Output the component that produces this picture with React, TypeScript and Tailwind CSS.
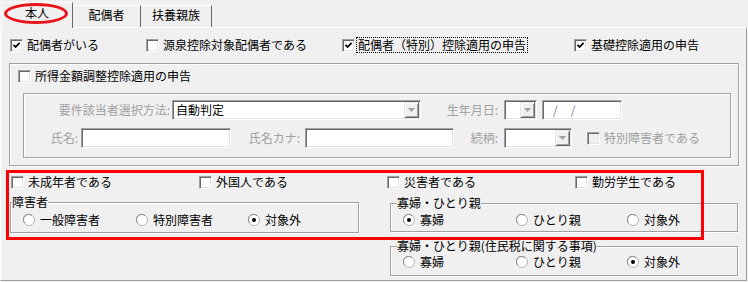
import React from 'react';

const DIS = 'text-[#a0a0a0]';
const sunken =
  'border border-t-[#a0a0a0] border-l-[#a0a0a0] border-r-white border-b-white shadow-[inset_1px_1px_0_#696969,inset_-1px_-1px_0_#e3e3e3]';

function Box({ checked, disabled }: { checked?: boolean; disabled?: boolean }) {
  return (
    <span className={`relative block w-[13px] h-[13px] shrink-0 ${sunken} ${disabled ? 'bg-[#f0f0f0]' : 'bg-white'}`}>
      {checked && (
        <svg className="absolute left-[1px] top-[1px]" width="9" height="9" viewBox="0 0 9 9">
          <path d="M1.5 3.8 L3.6 6 L7.6 1.8" stroke="#000" strokeWidth="1.8" fill="none" />
        </svg>
      )}
    </span>
  );
}

interface CheckProps {
  label: string;
  checked?: boolean;
  disabled?: boolean;
  focus?: boolean;
  className?: string;
}

function Check({ label, checked, disabled, focus, className = '' }: CheckProps) {
  return (
    <div className={`flex items-center h-[16px] shrink-0 ${className}`}>
      <Box checked={checked} disabled={disabled} />
      <span
        className={`leading-[14px] whitespace-nowrap ${disabled ? DIS : ''} ${
          focus ? 'ml-[2px] px-[1px] outline-1 outline-dotted outline-black' : 'ml-[4px]'
        }`}
      >
        {label}
      </span>
    </div>
  );
}

function Radio({ label, checked, className = '' }: { label: string; checked?: boolean; className?: string }) {
  return (
    <div className={`flex items-center h-[14px] shrink-0 ${className}`}>
      <svg width="12" height="12" viewBox="0 0 12 12" className="shrink-0">
        <circle cx="6" cy="6" r="5.5" fill="#fff" stroke="#b4b4b4" />
        <path d="M1.8 9 A5 5 0 0 1 9 1.8" stroke="#8a8a8a" fill="none" />
        {checked && <circle cx="6" cy="6" r="2" fill="#000" />}
      </svg>
      <span className="ml-[5px] leading-[14px] whitespace-nowrap">{label}</span>
    </div>
  );
}

function Group({
  legend,
  legendPos = 'left-[1px]',
  className = '',
  children,
}: {
  legend?: string;
  legendPos?: string;
  className?: string;
  children?: React.ReactNode;
}) {
  return (
    <div className={`relative border border-[#a0a0a0] shadow-[inset_1px_1px_0_#fff,1px_1px_0_#fff] ${className}`}>
      {legend && (
        <span className={`absolute top-[-8px] ${legendPos} bg-[#f0f0f0] leading-[14px] whitespace-nowrap`}>{legend}</span>
      )}
      {children}
    </div>
  );
}

function DropButton() {
  return (
    <span className="flex items-center justify-center w-[15px] shrink-0 bg-[#f0f0f0] border border-t-[#e3e3e3] border-l-[#e3e3e3] border-r-[#696969] border-b-[#696969] shadow-[inset_1px_1px_0_#fff,inset_-1px_-1px_0_#a0a0a0]">
      <svg width="7" height="4" viewBox="0 0 7 4">
        <path d="M0 0 H7 L3.5 4 Z" fill="#a0a0a0" />
      </svg>
    </span>
  );
}

function Combo({ text, className = '' }: { text?: string; className?: string }) {
  return (
    <div className={`flex h-[20px] p-[1px] bg-white shrink-0 ${sunken} ${className}`}>
      <span className="flex-1 pl-[2px] leading-[16px] whitespace-nowrap">{text}</span>
      <DropButton />
    </div>
  );
}

export default function App() {
  return (
    <div className="relative w-[748px] h-[282px] overflow-hidden bg-[#f0f0f0] text-[12px] text-black font-['Noto_Sans_CJK_JP','Noto_Sans',sans-serif]">
      {/* tabs */}
      <div className="flex items-end h-[27px] pl-[1px]">
        <div className="relative z-10 w-[72px] h-[26px] -mb-px bg-[#f0f0f0] border-t border-l border-white border-r border-r-[#696969] pt-[3px] text-center leading-[14px]">
          本人
        </div>
        <div className="w-[68px] h-[22px] border-t border-white border-r border-r-[#696969] pt-[2px] text-center leading-[14px]">
          配偶者
        </div>
        <div className="w-[71px] h-[22px] border-t border-white border-r border-r-[#696969] pt-[2px] text-center leading-[14px]">
          扶養親族
        </div>
      </div>

      {/* panel */}
      <div className="w-[747px] h-[254px] border border-t-white border-l-white border-r-[#a0a0a0] border-b-[#a0a0a0]">
        <div className="flex mt-[9px] ml-[9px]">
          <Check label="配偶者がいる" checked className="w-[136px]" />
          <Check label="源泉控除対象配偶者である" className="w-[196px]" />
          <Check label="配偶者（特別）控除適用の申告" checked focus className="w-[232px]" />
          <Check label="基礎控除適用の申告" checked />
        </div>

        <Group className="ml-[8px] mt-[10px] w-[730px] h-[103px]">
          <Check label="所得金額調整控除適用の申告" className="ml-[8px] mt-[4px]" />
          <Group className="ml-[13px] mt-[9px] w-[708px] h-[65px]">
            <div className="flex items-center mt-[6px] h-[20px]">
              <span className={`w-[146px] text-right leading-[14px] ${DIS}`}>要件該当者選択方法:</span>
              <Combo text="自動判定" className="ml-[2px] w-[249px]" />
              <span className={`w-[77px] text-right leading-[14px] ${DIS}`}>生年月日:</span>
              <Combo className="ml-[6px] w-[33px]" />
              <div className={`flex items-center ml-[5px] w-[80px] h-[20px] bg-white ${sunken} text-[#808080] leading-[14px]`}>
                <span className="ml-[10px]">/</span>
                <span className="ml-[13px]">/</span>
              </div>
            </div>
            <div className="flex items-center mt-[8px] h-[20px]">
              <span className={`w-[54px] text-right leading-[14px] ${DIS}`}>氏名:</span>
              <div className={`ml-[3px] w-[150px] h-[20px] bg-white ${sunken}`} />
              <span className={`w-[69px] text-right leading-[14px] ${DIS}`}>氏名カナ:</span>
              <div className={`ml-[5px] w-[149px] h-[20px] bg-white ${sunken}`} />
              <span className={`w-[44px] text-right leading-[14px] ${DIS}`}>続柄:</span>
              <Combo className="ml-[6px] w-[68px]" />
              <Check label="特別障害者である" disabled className="ml-[15px]" />
            </div>
          </Group>
        </Group>

        <div className="flex mt-[8px] ml-[10px]">
          <Check label="未成年者である" className="w-[188px]" />
          <Check label="外国人である" className="w-[188px]" />
          <Check label="災害者である" className="w-[188px]" />
          <Check label="勤労学生である" />
        </div>

        <div className="flex items-start mt-[12px] ml-[9px]">
          <Group legend="障害者" legendPos="left-[1px]" className="w-[349px] h-[31px]">
            <div className="flex pl-[12px] pt-[10px]">
              <Radio label="一般障害者" className="w-[113px]" />
              <Radio label="特別障害者" className="w-[112px]" />
              <Radio label="対象外" checked />
            </div>
          </Group>
          <Group legend="寡婦・ひとり親" legendPos="left-[6px]" className="ml-[31px] mt-px w-[348px] h-[29px]">
            <div className="flex pl-[12px] pt-[9px]">
              <Radio label="寡婦" checked className="w-[113px]" />
              <Radio label="ひとり親" className="w-[111px]" />
              <Radio label="対象外" />
            </div>
          </Group>
        </div>

        <Group legend="寡婦・ひとり親(住民税に関する事項)" legendPos="left-[6px]" className="ml-[389px] mt-[13px] w-[348px] h-[30px]">
          <div className="flex pl-[12px] pt-[8px]">
            <Radio label="寡婦" className="w-[113px]" />
            <Radio label="ひとり親" className="w-[111px]" />
            <Radio label="対象外" checked />
          </div>
        </Group>
      </div>

      {/* red annotations */}
      <div className="absolute z-20 left-[4px] top-[3px] w-[64px] h-[21px] rounded-[50%] border-[3px] border-[#e8141c]" />
      <div className="absolute z-20 left-[6px] top-[170px] w-[698px] h-[70px] border-[3px] border-[#ff0000]" />
    </div>
  );
}
